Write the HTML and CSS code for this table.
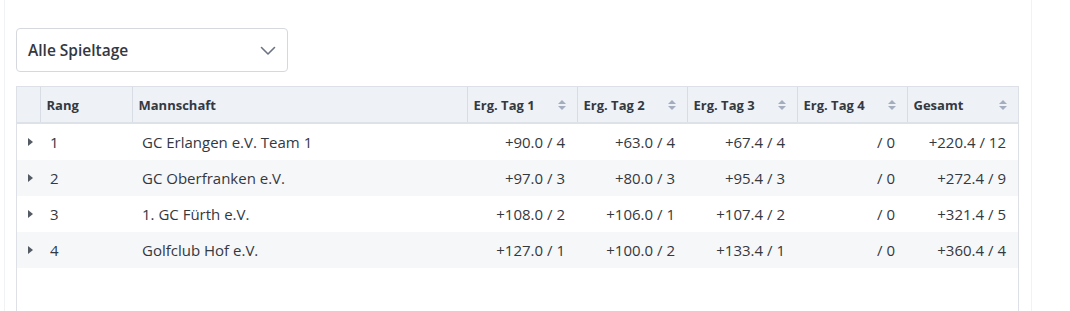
FILE: index.html
```html
<!DOCTYPE html>
<html lang="de">
<head>
<meta charset="utf-8">
<link rel="stylesheet" href="styles.css">
</head>
<body>
<div class="card">
  <div class="select">
    <span>Alle Spieltage</span>
    <svg class="chev" width="16" height="10" viewBox="0 0 16 10"><path d="M1.5 1.5 L8 8 L14.5 1.5" fill="none" stroke="#6b7280" stroke-width="1.6" stroke-linecap="round" stroke-linejoin="round"/></svg>
  </div>
  <div class="grid">
    <table>
      <colgroup>
        <col class="c-exp"><col class="c-rang"><col class="c-name"><col class="c-num"><col class="c-num"><col class="c-num"><col class="c-num"><col class="c-tot">
      </colgroup>
      <thead>
        <tr>
          <th></th>
          <th>Rang</th>
          <th>Mannschaft</th>
          <th><div class="th-s">Erg. Tag 1<i class="sort"></i></div></th>
          <th><div class="th-s">Erg. Tag 2<i class="sort"></i></div></th>
          <th><div class="th-s">Erg. Tag 3<i class="sort"></i></div></th>
          <th><div class="th-s">Erg. Tag 4<i class="sort"></i></div></th>
          <th><div class="th-s">Gesamt<i class="sort"></i></div></th>
        </tr>
      </thead>
      <tbody>
        <tr><td class="exp"><i class="tri"></i></td><td>1</td><td>GC Erlangen e.V. Team 1</td><td class="n">+90.0 / 4</td><td class="n">+63.0 / 4</td><td class="n">+67.4 / 4</td><td class="n">/ 0</td><td class="n">+220.4 / 12</td></tr>
        <tr><td class="exp"><i class="tri"></i></td><td>2</td><td>GC Oberfranken e.V.</td><td class="n">+97.0 / 3</td><td class="n">+80.0 / 3</td><td class="n">+95.4 / 3</td><td class="n">/ 0</td><td class="n">+272.4 / 9</td></tr>
        <tr><td class="exp"><i class="tri"></i></td><td>3</td><td>1. GC Fürth e.V.</td><td class="n">+108.0 / 2</td><td class="n">+106.0 / 1</td><td class="n">+107.4 / 2</td><td class="n">/ 0</td><td class="n">+321.4 / 5</td></tr>
        <tr><td class="exp"><i class="tri"></i></td><td>4</td><td>Golfclub Hof e.V.</td><td class="n">+127.0 / 1</td><td class="n">+100.0 / 2</td><td class="n">+133.4 / 1</td><td class="n">/ 0</td><td class="n">+360.4 / 4</td></tr>
      </tbody>
    </table>
  </div>
</div>
</body>
</html>
```

FILE: styles.css
```css
html, body {
  margin: 0;
  padding: 0;
  background: #fff;
}
body {
  font-family: "Open Sans", "Noto Sans", sans-serif;
  color: #34383f;
  overflow: hidden;
  height: 311px;
}
.card {
  margin-left: 4px;
  width: 1028px;
  border-left: 1px solid #f1f2f4;
  border-right: 1px solid #f1f2f4;
  padding: 28px 0 0 11px;
  box-sizing: border-box;
  height: 311px;
}
.select {
  width: 272px;
  height: 44px;
  box-sizing: border-box;
  border: 1px solid #d5d9df;
  border-radius: 4px;
  display: flex;
  align-items: center;
  justify-content: space-between;
  padding: 0 11px 0 11px;
  font-size: 15.5px;
  font-weight: 600;
  color: #34383f;
}
.chev { margin-top: 1px; }
.grid {
  margin-top: 14px;
  width: 1003px;
  height: 240px;
  box-sizing: border-box;
  border: 1px solid #dde1e7;
}
table {
  border-collapse: collapse;
  table-layout: fixed;
  width: 1001px;
}
.c-exp { width: 23px; }
.c-rang { width: 92px; }
.c-name { width: 335px; }
.c-num { width: 110px; }
.c-tot { width: 111px; }
thead th {
  background: #eef1f6;
  height: 36px;
  padding: 0 6px;
  text-align: left;
  font-size: 13px;
  font-weight: 700;
  color: #34383f;
  border-right: 1px solid #d8dde5;
  border-bottom: 2px solid #dde1e8;
  box-sizing: border-box;
}
thead th:last-child { border-right: none; }
.th-s {
  display: flex;
  align-items: center;
  justify-content: space-between;
  padding-right: 5px;
}
.sort {
  display: inline-flex;
  flex-direction: column;
  gap: 2px;
}
.sort::before, .sort::after {
  content: "";
  display: block;
  width: 0;
  height: 0;
  border-left: 4px solid transparent;
  border-right: 4px solid transparent;
}
.sort::before { border-bottom: 4px solid #a4adbd; }
.sort::after { border-top: 4px solid #a4adbd; }
tbody td {
  height: 36px;
  padding: 0 10px;
  font-size: 15px;
  color: #34383f;
  white-space: nowrap;
}
tbody tr:nth-child(even) td { background: #f6f7f9; }
td.n { text-align: right; padding-right: 12px; }
td.exp { padding: 0 0 0 11px; }
.tri {
  display: block;
  width: 0;
  height: 0;
  border-top: 4.5px solid transparent;
  border-bottom: 4.5px solid transparent;
  border-left: 5.5px solid #555b64;
}
```
